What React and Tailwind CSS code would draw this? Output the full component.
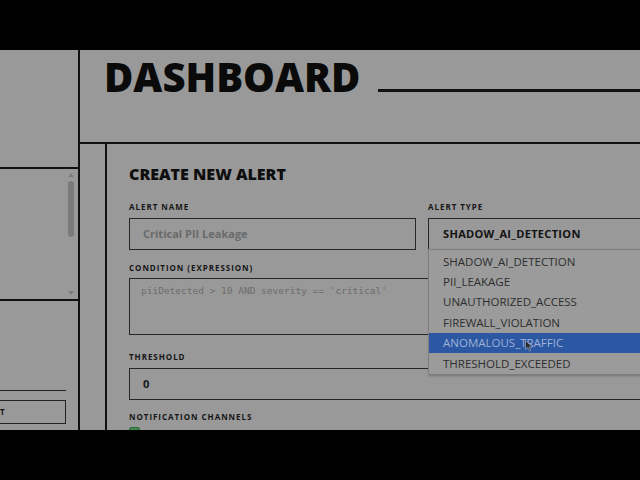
import React from "react";

const font = { fontFamily: "'Open Sans', 'Noto Sans', sans-serif" };

const alertTypes = [
  "SHADOW_AI_DETECTION",
  "PII_LEAKAGE",
  "UNAUTHORIZED_ACCESS",
  "FIREWALL_VIOLATION",
  "ANOMALOUS_TRAFFIC",
  "THRESHOLD_EXCEEDED",
];

const Label = ({ children }) => (
  <div className="h-[8px] text-[8px] font-bold tracking-[0.12em] text-[#161616] leading-none">
    {children}
  </div>
);

const Sidebar = () => (
  <aside className="w-[80px] shrink-0 h-full flex flex-col border-r-2 border-[#111]">
    <div className="h-[119px] border-b-2 border-[#111]" />
    <div className="h-[132px] border-b-2 border-[#111] flex justify-end pr-[3px] pt-[4px]">
      {/* scrollbar */}
      <div className="w-[8px] flex flex-col items-center">
        <div className="w-0 h-0 border-l-[3px] border-r-[3px] border-b-[4px] border-l-transparent border-r-transparent border-b-[#7c7c7c]" />
        <div className="mt-[4px] w-[6px] h-[56px] rounded-full bg-[#7a7a7a]" />
        <div className="flex-1" />
        <div className="mb-[4px] w-0 h-0 border-l-[3px] border-r-[3px] border-t-[4px] border-l-transparent border-r-transparent border-t-[#7c7c7c]" />
      </div>
    </div>
    <div className="flex-1 flex flex-col pr-[12px] pt-[89px]">
      <div className="h-px bg-[#222]" />
      <div className="mt-[9px] h-[24px] border border-[#222] border-l-0 flex items-center">
        <span className="text-[8px] font-bold text-[#161616] leading-none">T</span>
      </div>
    </div>
  </aside>
);

const Cursor = () => (
  <svg
    className="absolute left-[96px] top-[7px]"
    width="8"
    height="12"
    viewBox="0 0 8 12"
  >
    <path
      d="M0.5 0.5 L0.5 9.5 L2.8 7.4 L4.4 11 L5.8 10.4 L4.3 6.9 L7.3 6.9 Z"
      fill="#2b2b2b"
      stroke="#8aa0c8"
      strokeWidth="0.8"
    />
  </svg>
);

const Dropdown = () => (
  <div className="absolute left-0 top-[46px] w-[240px] bg-[#9b9b9b] border border-[#7e7e7e] shadow-[1px_1px_2px_rgba(0,0,0,0.25)] py-px">
    {alertTypes.map((t, i) => (
      <div
        key={t}
        className={
          i === 4
            ? "relative h-[20.4px] pl-[14px] flex items-center text-[11.5px] bg-[#2c57a3] text-[#9fb1d6]"
            : "h-[20.4px] pl-[14px] flex items-center text-[11.5px] text-[#2e2e2e]"
        }
      >
        {t}
        {i === 4 && <Cursor />}
      </div>
    ))}
  </div>
);

const Form = () => (
  <div className="flex-1 pl-[22px] pt-[22px] overflow-hidden">
    <h2 className="h-[17px] text-[16px] font-extrabold text-[#0e0e0e] leading-none">
      CREATE NEW ALERT
    </h2>

    <div className="mt-[20px] grid grid-cols-[287px_287px] gap-x-[12px] w-[586px]">
      <div>
        <Label>ALERT NAME</Label>
        <div className="mt-[7px] h-[32px] border-[1.5px] border-[#262626] flex items-center pl-[13px] text-[11px] font-bold text-[#6a6a6a]">
          Critical PII Leakage
        </div>
      </div>
      <div className="relative z-10">
        <Label>ALERT TYPE</Label>
        <div className="mt-[7px] h-[32px] border-[1.5px] border-[#262626] flex items-center pl-[14px] text-[11px] font-bold tracking-[0.03em] text-[#121212]">
          SHADOW_AI_DETECTION
        </div>
        <Dropdown />
      </div>
    </div>

    <div className="mt-[14px] w-[586px]">
      <Label>CONDITION (EXPRESSION)</Label>
      <div
        className="mt-[6px] h-[57px] border-[1.5px] border-[#262626] pl-[11px] pt-[5px] text-[9.5px] text-[#6c6c6c]"
        style={{ fontFamily: "'DejaVu Sans Mono', monospace" }}
      >
        piiDetected &gt; 10 AND severity == 'critical'
      </div>
    </div>

    <div className="mt-[18px] w-[586px]">
      <Label>THRESHOLD</Label>
      <div className="mt-[7px] h-[32px] border-[1.5px] border-[#262626] flex items-center pl-[13px] text-[11px] font-bold text-[#161616]">
        0
      </div>
    </div>

    <div className="mt-[13px]">
      <Label>NOTIFICATION CHANNELS</Label>
      <div className="mt-[6px] w-[11px] h-[11px] rounded-[2px] bg-[#3f8a4c] border border-[#2f6a3a]" />
    </div>
  </div>
);

export default function App() {
  return (
    <div className="w-[640px] h-[480px] bg-black flex flex-col" style={font}>
      <div className="h-[50px] shrink-0" />
      <div className="h-[380px] shrink-0 bg-[#999999] flex overflow-hidden">
        <Sidebar />
        <div className="flex-1 flex flex-col min-w-0">
          <header className="h-[94px] shrink-0 border-b-2 border-[#111] flex items-start pl-[24px] pt-[3px]">
            <h1 className="shrink-0 text-[40px] font-black text-[#0a0a0a] leading-[1.2]">
              DASHBOARD
            </h1>
            <div className="flex-1 ml-[18px] mt-[36px] h-[3px] bg-[#111]" />
          </header>
          <div className="flex-1 flex min-h-0">
            <div className="w-[25px] shrink-0" />
            <div className="flex-1 flex border-l-2 border-[#111] min-w-0">
              <Form />
            </div>
          </div>
        </div>
      </div>
      <div className="h-[50px] shrink-0" />
    </div>
  );
}
